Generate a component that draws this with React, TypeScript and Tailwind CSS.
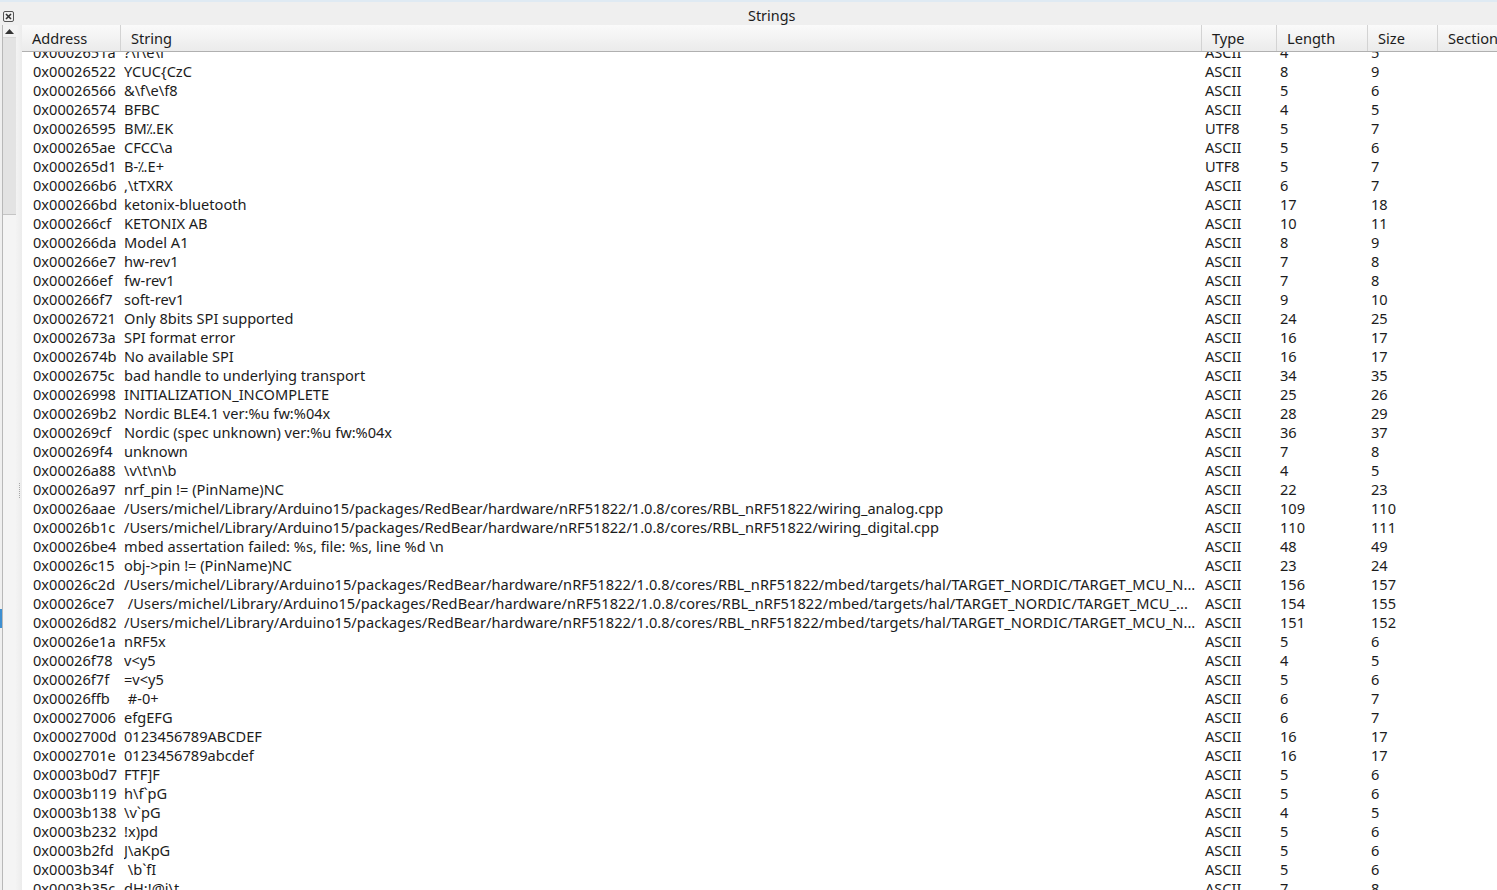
const rows: [string, string, string, string, string][] = [
["0x0002651a","?\\f\\e\\f","ASCII","4","5"],
["0x00026522","YCUC{CzC","ASCII","8","9"],
["0x00026566","&\\f\\e\\f8","ASCII","5","6"],
["0x00026574","BFBC","ASCII","4","5"],
["0x00026595","BM⁒.EK","UTF8","5","7"],
["0x000265ae","CFCC\\a","ASCII","5","6"],
["0x000265d1","B-⁒.E+","UTF8","5","7"],
["0x000266b6",",\\tTXRX","ASCII","6","7"],
["0x000266bd","ketonix-bluetooth","ASCII","17","18"],
["0x000266cf","KETONIX AB","ASCII","10","11"],
["0x000266da","Model A1","ASCII","8","9"],
["0x000266e7","hw-rev1","ASCII","7","8"],
["0x000266ef","fw-rev1","ASCII","7","8"],
["0x000266f7","soft-rev1","ASCII","9","10"],
["0x00026721","Only 8bits SPI supported","ASCII","24","25"],
["0x0002673a","SPI format error","ASCII","16","17"],
["0x0002674b","No available SPI","ASCII","16","17"],
["0x0002675c","bad handle to underlying transport","ASCII","34","35"],
["0x00026998","INITIALIZATION_INCOMPLETE","ASCII","25","26"],
["0x000269b2","Nordic BLE4.1 ver:%u fw:%04x","ASCII","28","29"],
["0x000269cf","Nordic (spec unknown) ver:%u fw:%04x","ASCII","36","37"],
["0x000269f4","unknown","ASCII","7","8"],
["0x00026a88","\\v\\t\\n\\b","ASCII","4","5"],
["0x00026a97","nrf_pin != (PinName)NC","ASCII","22","23"],
["0x00026aae","/Users/michel/Library/Arduino15/packages/RedBear/hardware/nRF51822/1.0.8/cores/RBL_nRF51822/wiring_analog.cpp","ASCII","109","110"],
["0x00026b1c","/Users/michel/Library/Arduino15/packages/RedBear/hardware/nRF51822/1.0.8/cores/RBL_nRF51822/wiring_digital.cpp","ASCII","110","111"],
["0x00026be4","mbed assertation failed: %s, file: %s, line %d \\n","ASCII","48","49"],
["0x00026c15","obj->pin != (PinName)NC","ASCII","23","24"],
["0x00026c2d","/Users/michel/Library/Arduino15/packages/RedBear/hardware/nRF51822/1.0.8/cores/RBL_nRF51822/mbed/targets/hal/TARGET_NORDIC/TARGET_MCU_N...","ASCII","156","157"],
["0x00026ce7"," /Users/michel/Library/Arduino15/packages/RedBear/hardware/nRF51822/1.0.8/cores/RBL_nRF51822/mbed/targets/hal/TARGET_NORDIC/TARGET_MCU_...","ASCII","154","155"],
["0x00026d82","/Users/michel/Library/Arduino15/packages/RedBear/hardware/nRF51822/1.0.8/cores/RBL_nRF51822/mbed/targets/hal/TARGET_NORDIC/TARGET_MCU_N...","ASCII","151","152"],
["0x00026e1a","nRF5x","ASCII","5","6"],
["0x00026f78","v<y5","ASCII","4","5"],
["0x00026f7f","=v<y5","ASCII","5","6"],
["0x00026ffb"," #-0+","ASCII","6","7"],
["0x00027006","efgEFG","ASCII","6","7"],
["0x0002700d","0123456789ABCDEF","ASCII","16","17"],
["0x0002701e","0123456789abcdef","ASCII","16","17"],
["0x0003b0d7","FTF]F","ASCII","5","6"],
["0x0003b119","h\\f`pG","ASCII","5","6"],
["0x0003b138","\\v`pG","ASCII","4","5"],
["0x0003b232","!x)pd","ASCII","5","6"],
["0x0003b2fd","J\\aKpG","ASCII","5","6"],
["0x0003b34f"," \\b`fI","ASCII","5","6"],
["0x0003b35c","dH:!@i\\t","ASCII","7","8"],
];
const heads: [string, string][] = [["Address","w-[99px]"],["String","w-[1081px]"],["Type","w-[75px]"],["Length","w-[91px]"],["Size","w-[70px]"],["Section","w-[60px]"]];
export default function App() {
  return (
    <div className="w-[1497px] h-[890px] overflow-hidden bg-[#efefef] flex flex-col text-[14.6px] text-[#1c1c1c] [font-family:'Noto_Sans',sans-serif]">
      <div className="h-[2px] bg-[#dfeaf3]" />
      <div className="h-[23px] flex items-center relative">
        <div className="w-[11px] h-[11px] ml-[3px] mt-[5px] border border-[#555] rounded-[2px] flex items-center justify-center">
          <svg width="9" height="9" viewBox="0 0 9 9"><path d="M2 2L7 7M7 2L2 7" stroke="#333" strokeWidth="1.6"/></svg>
        </div>
        <div className="absolute left-[748px] top-[2px] leading-[24px] text-[14.4px]">Strings</div>
      </div>
      <div className="flex-1 flex min-h-0">
        <div className="w-[2px] flex flex-col">
          <div className="h-[584px]" />
          <div className="h-[19px] bg-[#3d8fd1]" />
        </div>
        <div className="w-px bg-[#b8b8b8]" />
        <div className="w-[13px] bg-[#f4f4f4] flex flex-col">
          <div className="h-[13px] bg-[#f2f2f2] border-b border-[#d8d8d8] flex justify-center pt-[4px]">
            <svg width="9" height="5" viewBox="0 0 9 5"><path d="M4.5 0L9 5H0Z" fill="#333"/></svg>
          </div>
          <div className="h-[177px] bg-[#e3e3e3] border-b border-[#c4c4c4]" />
        </div>
        <div className="w-[6px] bg-gradient-to-r from-[#f3f3f3] to-[#ececec] flex flex-col items-center">
          <div className="h-[458px]" />
          <div className="h-[15px] w-px border-l border-dotted border-[#a8a8a8]" />
        </div>
        <div className="flex-1 flex flex-col min-w-0 bg-white">
          <div className="h-[27px] flex shrink-0 bg-gradient-to-b from-[#fafafa] to-[#ebebeb] border-b border-[#b0b0b0]">
            {heads.map(([h, w]) => (
              <div key={h} className={`${w} shrink-0 pl-[10px] pt-[1px] border-r border-[#d3d3d3] leading-[24px] whitespace-nowrap`}>{h}</div>
            ))}
          </div>
          <div className="flex-1 overflow-hidden">
            <div className="-mt-[9px]">
              {rows.map((r) => (
                <div key={r[0]} className="h-[19px] flex leading-[19px] whitespace-pre">
                  <div className="w-[102px] shrink-0 pl-[11px]">{r[0]}</div>
                  <div className={`w-[1081px] shrink-0 overflow-hidden ${r[1].length > 130 ? "tracking-[0.07px]" : ""}`}>{r[1]}</div>
                  <div className="w-[75px] shrink-0">{r[2]}</div>
                  <div className="w-[91px] shrink-0">{r[3]}</div>
                  <div className="w-[70px] shrink-0">{r[4]}</div>
                </div>
              ))}
            </div>
          </div>
        </div>
      </div>
    </div>
  );
}
